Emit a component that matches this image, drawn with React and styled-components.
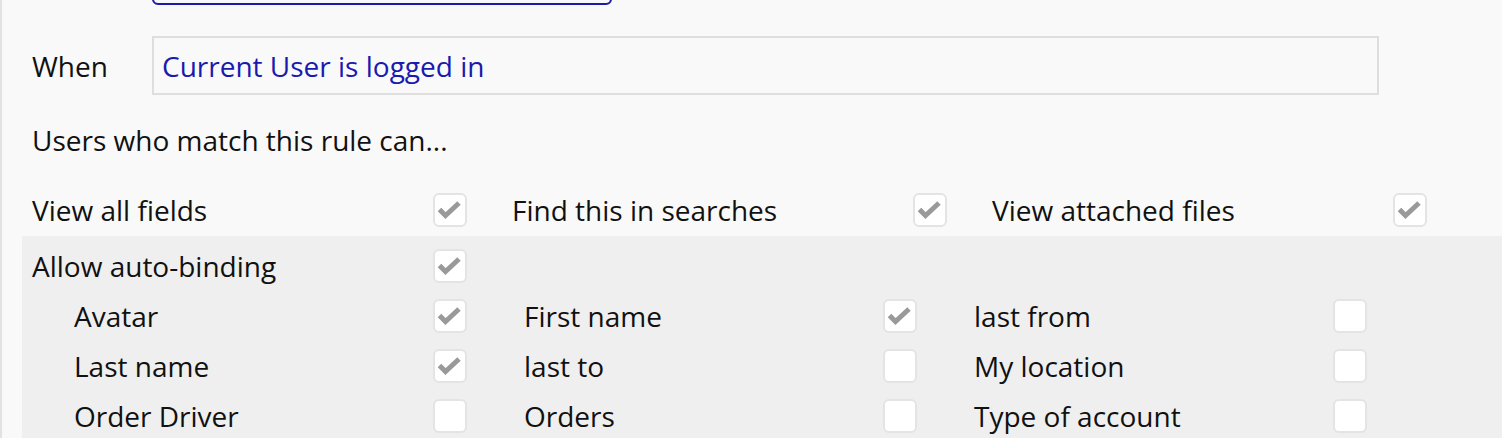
import React from "react";
import styled, { createGlobalStyle } from "styled-components";

const Global = createGlobalStyle`
  html, body {
    margin: 0;
    padding: 0;
    background: #f9f9f9;
    font-family: "Open Sans", "Noto Sans", sans-serif;
    color: #111;
    overflow: hidden;
  }
`;

const Panel = styled.div`
  width: 1502px;
  height: 438px;
  box-sizing: border-box;
  border-left: 2px solid #e2e2e2;
  background: #f9f9f9;
  overflow: hidden;
`;

const TopBox = styled.div`
  margin: -41px 0 0 150px;
  width: 460px;
  height: 46px;
  box-sizing: border-box;
  border: 2px solid #1b1ba8;
  border-radius: 6px;
`;

const WhenRow = styled.div`
  display: flex;
  align-items: center;
  margin-top: 31px;
  padding-left: 30px;
`;

const Label = styled.div`
  font-size: 28px;
  line-height: 38px;
  width: ${(p) => p.$w || "auto"};
  flex-shrink: 0;
  white-space: nowrap;
`;

const Condition = styled.div`
  width: 1227px;
  height: 59px;
  box-sizing: border-box;
  border: 2px solid #dedede;
  padding: 0 8px;
  display: flex;
  align-items: center;
  color: #1a1aae;
  font-size: 28px;
`;

const Intro = styled(Label)`
  padding: 26px 0 0 30px;
`;

const Grid = styled.div`
  display: grid;
  grid-template-columns: ${(p) => p.$cols};
  padding-left: ${(p) => p.$pad}px;
  align-items: center;
`;

const TopGrid = styled(Grid)`
  margin-top: 30px;
`;

const Binding = styled.div`
  margin: 5px 0 0 20px;
  background: #efefef;
  padding-top: 5px;
  height: 200px;
`;

const Cell = styled.div`
  display: flex;
  align-items: center;
  height: ${(p) => p.$h}px;
`;

const Box = styled.div`
  width: 34px;
  height: 34px;
  box-sizing: border-box;
  border: 2px solid #e4e4e4;
  border-radius: 6px;
  background: #fff;
  flex-shrink: 0;
  svg {
    display: block;
  }
`;

const Check = ({ on }) => (
  <Box>
    {on && (
      <svg width="30" height="30" viewBox="0 0 30 30">
        <path d="M4.5 14.5 L10.5 20.5 L24 8" fill="none" stroke="#999" strokeWidth="5" />
      </svg>
    )}
  </Box>
);

const Item = ({ label, on, w, h }) => (
  <Cell $h={h}>
    <Label $w={w}>{label}</Label>
    <Check on={on} />
  </Cell>
);

const top = [
  ["View all fields", true],
  ["Find this in searches", true],
  ["View attached files", true],
];

const fields = [
  ["Avatar", true],
  ["First name", true],
  ["last from", false],
  ["Last name", true],
  ["last to", false],
  ["My location", false],
  ["Order Driver", false],
  ["Orders", false],
  ["Type of account", false],
];

export default function App() {
  return (
    <>
      <Global />
      <Panel>
        <TopBox />
        <WhenRow>
          <Label $w="120px">When</Label>
          <Condition>Current User is logged in</Condition>
        </WhenRow>
        <Intro>Users who match this rule can...</Intro>
        <TopGrid $cols="480px 480px 480px" $pad={30}>
          {top.map(([l, on]) => (
            <Item key={l} label={l} on={on} w="401px" h={42} />
          ))}
        </TopGrid>
        <Binding>
          <Grid $cols="480px" $pad={10}>
            <Item label="Allow auto-binding" on w="401px" h={50} />
          </Grid>
          <Grid $cols="450px 450px 450px" $pad={52}>
            {fields.map(([l, on]) => (
              <Item key={l} label={l} on={on} w="359px" h={50} />
            ))}
          </Grid>
        </Binding>
      </Panel>
    </>
  );
}
